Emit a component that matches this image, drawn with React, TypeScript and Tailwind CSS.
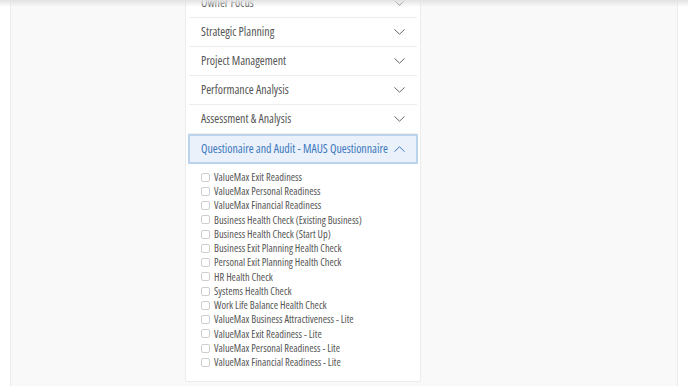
import React, { useState } from 'react';

const SECTIONS = [
  'Owner Focus',
  'Strategic Planning',
  'Project Management',
  'Performance Analysis',
  'Assessment & Analysis',
];

const CHECKS = [
  'ValueMax Exit Readiness',
  'ValueMax Personal Readiness',
  'ValueMax Financial Readiness',
  'Business Health Check (Existing Business)',
  'Business Health Check (Start Up)',
  'Business Exit Planning Health Check',
  'Personal Exit Planning Health Check',
  'HR Health Check',
  'Systems Health Check',
  'Work Life Balance Health Check',
  'ValueMax Business Attractiveness - Lite',
  'ValueMax Exit Readiness - Lite',
  'ValueMax Personal Readiness - Lite',
  'ValueMax Financial Readiness - Lite',
];

function Chevron({ up = false, color = '#666' }: { up?: boolean; color?: string }) {
  return (
    <svg width="11" height="6" viewBox="0 0 11 6" fill="none" className="shrink-0">
      <path
        d={up ? 'M0.7 5.4L5.5 0.8L10.3 5.4' : 'M0.7 0.6L5.5 5.2L10.3 0.6'}
        stroke={color}
        strokeWidth="1"
        strokeLinecap="round"
        strokeLinejoin="round"
      />
    </svg>
  );
}

export default function App() {
  const [checked, setChecked] = useState<Record<string, boolean>>({});

  return (
    <div className="relative h-[386px] overflow-hidden bg-white font-['Open_Sans',sans-serif] [font-stretch:75%]">
      {/* header shadow from above */}
      <div className="absolute left-0 right-0 top-0 h-[7px] bg-gradient-to-b from-[#e2e2e2] to-transparent z-10" />

      <div className="mx-[10px] h-full bg-[#f9f9f9] border-x border-[#ececec] flex pl-[174px]">
        <div className="w-[236px] -mt-[15px] mb-[7px] self-start bg-white border border-[#ececec] rounded-[2px] p-[3px]">
          {/* Accordion */}
          {SECTIONS.map((s) => (
            <div
              key={s}
              className="flex items-center justify-between h-[29px] pl-[12px] pr-[12px] border-b border-[#ececec] text-[11.9px] text-[#555]"
            >
              <span>{s}</span>
              <Chevron />
            </div>
          ))}

          <div className="flex items-center justify-between h-[30px] pl-[11px] pr-[11px] bg-[#eaf1fa] border-2 border-[#bcd3ee] text-[11.9px] text-[#3b78be] -mx-[1px]">
            <span>Questionaire and Audit - MAUS Questionnaire</span>
            <Chevron up color="#3b78be" />
          </div>

          <ul className="flex flex-col pt-[6px] pb-[8px] px-[12px]">
            {CHECKS.map((c) => (
              <li key={c} className="flex items-center h-[14.25px] gap-[4px]">
                <button
                  onClick={() => setChecked({ ...checked, [c]: !checked[c] })}
                  className={`size-[9px] rounded-[2px] border shrink-0 ${
                    checked[c] ? 'bg-[#3b78be] border-[#3b78be]' : 'bg-white border-[#cfcfcf]'
                  }`}
                />
                <span className="text-[10.4px] leading-none text-[#555] whitespace-nowrap">{c}</span>
              </li>
            ))}
          </ul>
        </div>
      </div>
    </div>
  );
}
